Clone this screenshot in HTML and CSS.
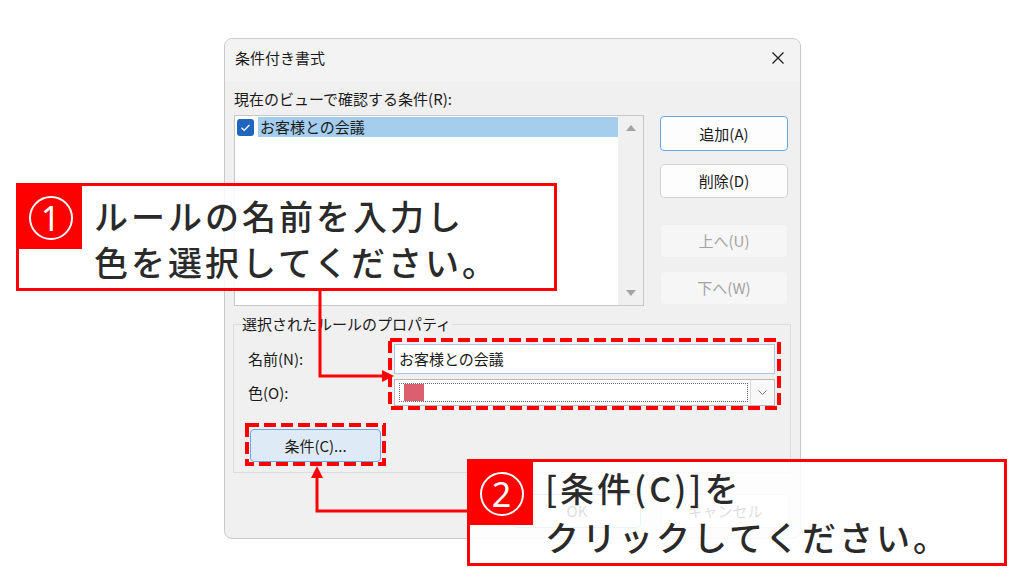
FILE: index.html
```html
<!DOCTYPE html>
<html lang="ja">
<head>
<meta charset="utf-8">
<title>条件付き書式</title>
<link rel="stylesheet" href="styles.css">
</head>
<body>
<div class="dialog">
  <div class="titlebar">
    <span class="title">条件付き書式</span>
    <svg class="close" width="14" height="14" viewBox="0 0 14 14"><path d="M1.5 1.5 L12.5 12.5 M12.5 1.5 L1.5 12.5" stroke="#1f1f1f" stroke-width="1.3" fill="none"/></svg>
  </div>
  <div class="content">
    <div class="section-label">現在のビューで確認する条件(R):</div>
    <div class="main-row">
      <div class="listbox">
        <div class="list-items">
          <div class="item">
            <svg class="check" width="17" height="17" viewBox="0 0 17 17"><rect x="0" y="0" width="17" height="17" rx="3" fill="#1f66c1"/><path d="M4.5 8.8 L7.2 11.4 L12.4 6" stroke="#fff" stroke-width="1.3" fill="none"/></svg>
            <span class="item-text">お客様との会議</span>
          </div>
        </div>
        <div class="scrollbar">
          <svg width="10" height="6" viewBox="0 0 10 6"><polygon points="0,6 5,0 10,6" fill="#a3a3a3"/></svg>
          <svg width="10" height="6" viewBox="0 0 10 6"><polygon points="0,0 10,0 5,6" fill="#a3a3a3"/></svg>
        </div>
      </div>
      <div class="side-buttons">
        <button class="btn btn-default btn-add">追加(A)</button>
        <button class="btn btn-del">削除(D)</button>
        <button class="btn btn-disabled btn-up">上へ(U)</button>
        <button class="btn btn-disabled btn-down">下へ(W)</button>
      </div>
    </div>
    <fieldset class="group">
      <legend>選択されたルールのプロパティ</legend>
      <div class="form-grid">
        <span class="field-label">名前(N):</span>
        <div class="textbox">お客様との会議</div>
        <span class="field-label">色(O):</span>
        <div class="combo">
          <div class="combo-field"><span class="swatch"></span></div>
          <div class="combo-arrow"><svg width="9" height="5" viewBox="0 0 9 5"><path d="M0.5 0.5 L4.5 4.5 L8.5 0.5" stroke="#7a7a7a" stroke-width="1" fill="none"/></svg></div>
        </div>
      </div>
      <button class="btn btn-cond">条件(C)...</button>
    </fieldset>
    <div class="footer">
      <button class="btn btn-default">OK</button>
      <button class="btn">キャンセル</button>
    </div>
  </div>
</div>

<svg class="annotations" width="1024" height="576" viewBox="0 0 1024 576">
  <rect x="390" y="340" width="389" height="68" fill="none" stroke="#ff0000" stroke-width="4" stroke-dasharray="12 5"/>
  <rect x="247" y="425" width="137" height="39" fill="none" stroke="#ff0000" stroke-width="4" stroke-dasharray="12 5"/>
  <path d="M320 290 V376 H384" fill="none" stroke="#ff0000" stroke-width="3"/>
  <polygon points="394,376 382,370 382,382" fill="#ff0000"/>
  <path d="M468 511 H317 V477" fill="none" stroke="#ff0000" stroke-width="3"/>
  <polygon points="317,466 311,478 323,478" fill="#ff0000"/>
</svg>

<div class="callout callout-1">
  <div class="badge"><span class="num">1</span></div>
  <div class="callout-text">ルールの名前を入力し<br>色を選択してください。</div>
</div>
<div class="callout callout-2">
  <div class="badge"><span class="num">2</span></div>
  <div class="callout-text">[条件(C)]を<br>クリックしてください。</div>
</div>
</body>
</html>
```
FILE: styles.css
```css
* { box-sizing: border-box; }
html, body { margin: 0; padding: 0; }
body {
  width: 1024px;
  height: 576px;
  overflow: hidden;
  position: relative;
  background: #ffffff;
  font-family: "Noto Sans CJK JP", "Noto Sans", sans-serif;
  color: #1a1a1a;
}

/* dialog */
.dialog {
  margin: 38px 0 0 224px;
  width: 577px;
  height: 501px;
  border: 1px solid #c9c9c9;
  border-radius: 8px;
  background: #f0f0f0;
  font-size: 15px;
  line-height: 18px;
}
.titlebar {
  height: 42px;
  display: flex;
  align-items: center;
  justify-content: space-between;
  padding: 0 15px 4px 10px;
  background: #f3f3f3;
  border-radius: 7px 7px 0 0;
}
.title { font-size: 15px; }
.close { display: block; }

.content { padding: 9px 11px 0 9px; }
.section-label { height: 18px; }

.main-row {
  display: flex;
  margin-top: 7px;
}
.listbox {
  width: 410px;
  height: 191px;
  border: 1px solid #c6c6c6;
  background: #ffffff;
  display: flex;
}
.list-items { flex: 1; }
.item {
  display: flex;
  align-items: center;
  height: 20px;
  margin-top: 1px;
  padding-left: 2px;
}
.check { display: block; flex: none; }
.item-text {
  flex: 1;
  height: 20px;
  line-height: 20px;
  margin-left: 4px;
  padding-left: 2px;
  background: #a4cdee;
}
.scrollbar {
  width: 25px;
  background: #f0f0f0;
  display: flex;
  flex-direction: column;
  align-items: center;
  justify-content: space-between;
  padding: 9px 0 9px;
}
.scrollbar svg { display: block; }

.side-buttons {
  margin-left: 16px;
  width: 128px;
  display: flex;
  flex-direction: column;
}
.btn {
  font: inherit;
  font-size: 15px;
  line-height: 18px;
  width: 128px;
  height: 34px;
  padding: 0;
  border: 1px solid #d3d3d3;
  border-radius: 4px;
  background: #fdfdfd;
  color: #1a1a1a;
}
.btn-default { border-color: #68a6e6; }
.btn-disabled {
  background: #f6f6f6;
  border-color: #efefef;
  color: #a3a3a3;
}
.btn-add { margin-top: 1px; height: 35px; }
.btn-del { margin-top: 13px; }
.btn-up { margin-top: 26px; }
.btn-down { margin-top: 13px; }

/* group box */
.group {
  margin: 8px -2px 0 -1px;
  padding: 0 15px 10px 14px;
  border: 1px solid #dcdcdc;
  min-width: 0;
}
.group legend {
  padding: 0 1px;
  margin-left: -7px;
  line-height: 20px;
  font-size: 15px;
}
.form-grid {
  margin-top: 10px;
  display: grid;
  grid-template-columns: 146px 1fr;
  row-gap: 5px;
  align-items: center;
}
.field-label { font-size: 15px; }
.textbox {
  height: 30px;
  border: 1px solid #a9c6e6;
  background: #ffffff;
  padding-left: 4px;
  line-height: 28px;
  font-size: 15px;
}
.combo {
  height: 27px;
  border: 1px solid #b9b9b9;
  background: #ffffff;
  display: flex;
}
.combo-field {
  flex: 1;
  margin: 3px 2px 3px 4px;
  border: 1px dotted #666;
  display: flex;
  align-items: center;
  padding-left: 4px;
}
.swatch {
  width: 20px;
  height: 17px;
  background: #dc5f6f;
}
.combo-arrow {
  width: 24px;
  border-left: 1px solid #dadada;
  background: #f8f8f8;
  display: flex;
  align-items: center;
  justify-content: center;
}
.combo-arrow svg { display: block; }

.btn-cond {
  margin: 23px 0 0 2px;
  width: 131px;
  height: 33px;
  background: #dfeaf7;
  border-color: #6aa8e4;
}

.footer {
  margin-top: 21px;
  display: flex;
  justify-content: flex-end;
  gap: 20px;
}

/* annotations */
.annotations {
  position: absolute;
  left: 0;
  top: 0;
  pointer-events: none;
}
.callout {
  position: absolute;
  border: 3px solid #ff0000;
  background: rgba(255, 255, 255, 0.85);
  display: flex;
  align-items: flex-start;
  color: #2a2a2a;
  font-weight: 500;
  font-size: 34px;
  letter-spacing: 3px;
  white-space: nowrap;
}
.callout-1 {
  left: 16px;
  top: 183px;
  width: 541px;
  height: 108px;
  line-height: 46px;
}
.callout-2 {
  left: 467px;
  top: 459px;
  width: 540px;
  height: 107px;
  line-height: 49px;
}
.badge {
  width: 63px;
  height: 63px;
  flex: none;
  background: #ff0000;
  display: flex;
  align-items: center;
  justify-content: center;
}
.num {
  width: 44px;
  height: 44px;
  border: 2px solid #ffffff;
  border-radius: 50%;
  color: #ffffff;
  font-family: "Noto Sans", sans-serif;
  font-weight: 400;
  font-size: 34px;
  line-height: 40px;
  letter-spacing: 0;
  text-align: center;
}
.callout-text { margin-left: 12px; }
.callout-1 .callout-text { padding-top: 7px; }
.callout-2 .callout-text { padding-top: 1px; }
```
